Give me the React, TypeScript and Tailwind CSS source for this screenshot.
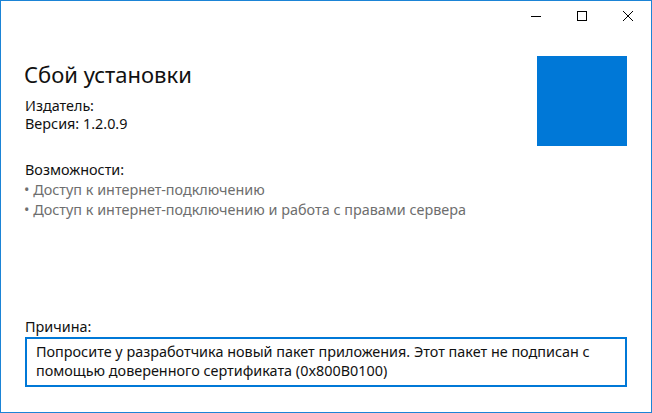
import React from 'react';

const font = { fontFamily: '"Noto Sans", "Open Sans", sans-serif' };

const CaptionButton: React.FC<{ children: React.ReactNode }> = ({ children }) => (
  <div className="w-[46px] h-[30px] flex items-center justify-center">{children}</div>
);

export default function App() {
  return (
    <div
      className="w-[652px] h-[413px] bg-white border border-[#1b84d6] flex flex-col text-[#111] overflow-hidden"
      style={font}
    >
      {/* title bar */}
      <div className="h-[30px] flex justify-end shrink-0">
        <CaptionButton>
          <svg width="10" height="10" viewBox="0 0 10 10" shapeRendering="crispEdges">
            <path d="M0 5.5H10" stroke="#000" strokeWidth="1" />
          </svg>
        </CaptionButton>
        <CaptionButton>
          <svg width="10" height="10" viewBox="0 0 10 10" shapeRendering="crispEdges">
            <rect x="0.5" y="0.5" width="9" height="9" fill="none" stroke="#000" strokeWidth="1" />
          </svg>
        </CaptionButton>
        <CaptionButton>
          <svg width="10" height="10" viewBox="0 0 10 10">
            <path d="M0 0L10 10M10 0L0 10" stroke="#000" strokeWidth="1" />
          </svg>
        </CaptionButton>
      </div>

      {/* content */}
      <div className="flex-1 flex px-6 min-h-0">
        <div className="flex-1 flex flex-col">
          <h1 className="mt-[29px] text-[22px] leading-[28px] font-normal -ml-px">Сбой установки</h1>
          <div className="mt-[9px] text-[14.4px] leading-[18px]">
            <div>Издатель:</div>
            <div>Версия: 1.2.0.9</div>
          </div>
          <div className="mt-[27px] text-[14.4px] leading-[20px]">
            <div>Возможности:</div>
            <ul className="text-[#6e6e6e] -ml-px">
              <li>• Доступ к интернет-подключению</li>
              <li>• Доступ к интернет-подключению и работа с правами сервера</li>
            </ul>
          </div>
        </div>
        <div className="w-[90px] h-[90px] bg-[#0078d7] mt-[25px] shrink-0" />
      </div>

      {/* reason */}
      <div className="px-6 pb-[25px] shrink-0">
        <div className="text-[14.4px] leading-[20px]">Причина:</div>
        <div className="border-2 border-[#0078d7] pl-[9px] pr-3 pt-[3px] pb-[5px] text-[14.4px] leading-[19px]">
          Попросите у разработчика новый пакет приложения. Этот пакет не подписан с помощью доверенного
          сертификата (0x800B0100)
        </div>
      </div>
    </div>
  );
}
